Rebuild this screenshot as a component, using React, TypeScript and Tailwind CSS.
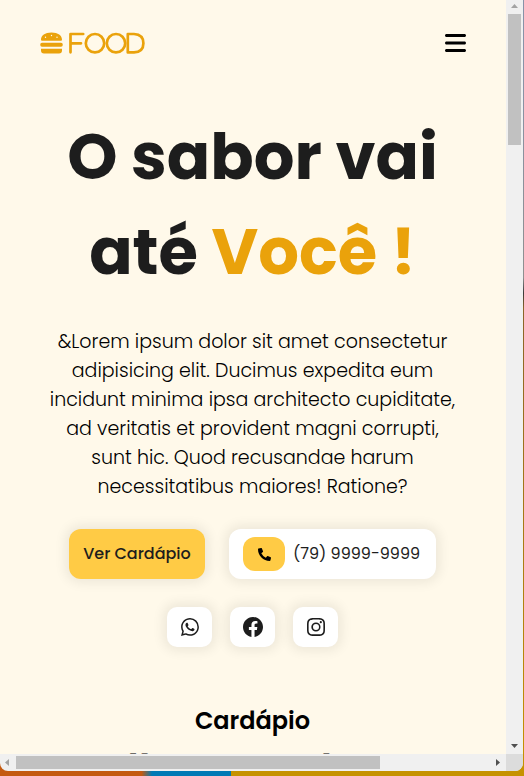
import { FaPhoneAlt } from "react-icons/fa";
import { FaBars } from "react-icons/fa6";
import { BsWhatsapp, BsFacebook, BsInstagram } from "react-icons/bs";

const socials = [
  { label: "WhatsApp", Icon: BsWhatsapp, size: "size-[18px]" },
  { label: "Facebook", Icon: BsFacebook, size: "size-5" },
  { label: "Instagram", Icon: BsInstagram, size: "size-[18px]" },
];

function Logo() {
  return (
    <a href="#inicio" aria-label="Food" className="text-[#eaa20b]">
      <svg width="105" height="24" viewBox="0 0 105 24" fill="none">
        <path
          fill="currentColor"
          d="M1 8.800C1 4.500 5 1.600 11.500 1.600S22 4.500 22 8.800Q22 9.800 21 9.800H2Q1 9.800 1 8.800ZM2 11.800H21Q22.800 11.800 22.800 13.800T21 15.800H2Q0.200 15.800 0.200 13.800T2 11.800ZM1 17.800H22V19.500Q22 22.500 19 22.500H4Q1 22.500 1 19.500Z"
        />
        <g fill="#fff9ea">
          <circle cx="5.500" cy="6.200" r="0.700" />
          <circle cx="11.500" cy="4.500" r="0.700" />
          <circle cx="17" cy="6.200" r="0.700" />
        </g>
        <g stroke="currentColor" strokeWidth="2.700" strokeLinecap="round" strokeLinejoin="round">
          <path d="M43.200 3H30.500V21.300M30.500 12.300H41" />
          <circle cx="55" cy="12.200" r="9.200" />
          <circle cx="76" cy="12.200" r="9.200" />
          <path d="M87.800 3H94Q103.400 3.500 103.400 12.200T94 21.400H87.800Z" />
        </g>
      </svg>
    </a>
  );
}

function Hero() {
  return (
    <section className="px-10 text-center">
      <h1 className="mt-6 text-[64px] leading-[95px] font-bold text-[#1d1d1d]">
        O sabor vai
        <br />
        até <span className="text-[#eaa20b]">Você !</span>
      </h1>
      <p className="mt-7 text-[19px] leading-[29px] font-light whitespace-nowrap text-black">
        &amp;Lorem ipsum dolor sit amet consectetur
        <br />
        adipisicing elit. Ducimus expedita eum
        <br />
        incidunt minima ipsa architecto cupiditate,
        <br />
        ad veritatis et provident magni corrupti,
        <br />
        sunt hic. Quod recusandae harum
        <br />
        necessitatibus maiores! Ratione?
      </p>
      <div className="mt-7 flex justify-center gap-6">
        <button className="h-[50px] w-[136px] rounded-xl bg-[#ffcb45] text-base font-medium whitespace-nowrap text-[#1d1d1d] shadow-[0_0_12px_4px_rgba(0,0,0,0.07)]">
          Ver Cardápio
        </button>
        <a
          href="tel:7999999999"
          className="flex h-[50px] w-[207px] items-center gap-2 rounded-xl bg-white px-[14px] text-base whitespace-nowrap text-[#1d1d1d] shadow-[0_0_12px_4px_rgba(0,0,0,0.07)]"
        >
          <span className="flex h-[34px] w-[42px] shrink-0 items-center justify-center rounded-xl bg-[#ffcb45] text-black">
            <FaPhoneAlt className="size-[13px]" />
          </span>
          (79) 9999-9999
        </a>
      </div>
      <div className="mt-7 flex justify-center gap-[18px]">
        {socials.map(({ label, Icon, size }) => (
          <a
            key={label}
            href="#contato"
            aria-label={label}
            className="flex h-10 w-[45px] items-center justify-center rounded-[10px] bg-white text-[#1d1d1d] shadow-[0_0_12px_4px_rgba(0,0,0,0.07)]"
          >
            <Icon className={size} />
          </a>
        ))}
      </div>
    </section>
  );
}

function Arrow({ d, muted }: { d: string; muted?: boolean }) {
  return (
    <svg width="7" height="7" viewBox="0 0 7 7" className={muted ? "text-[#a3a3a3]" : "text-[#505050]"}>
      <path d={d} fill="currentColor" />
    </svg>
  );
}

export default function App() {
  return (
    <div className="flex h-screen flex-col overflow-hidden bg-[linear-gradient(to_right,#c45a10_27%,#0079b5_29%,#0079b5_44%,#c69200_44%)] font-['Poppins','Inter',sans-serif]">
      <div className="flex min-h-0 grow">
        <div className="grid min-w-0 grow grid-cols-[1fr_17px] grid-rows-[1fr_17px] overflow-hidden rounded-b-lg bg-[#f0f0f0]">
          <main className="min-w-0 overflow-hidden bg-[#fff9ea] pr-px">
            <header className="flex h-[85px] items-center justify-between pr-[39px] pl-10">
              <Logo />
              <button aria-label="Abrir menu" className="text-black">
                <FaBars className="h-6 w-[21px]" />
              </button>
            </header>
            <Hero />
            <section className="mt-14 text-center text-black">
              <h2 className="text-2xl leading-9 font-semibold">Cardápio</h2>
              <h3 className="text-[42px] leading-[64px] font-semibold whitespace-nowrap">Melhores sabores</h3>
            </section>
          </main>
          <div className="flex flex-col items-center justify-between pt-[3px] pb-[5px]">
            <Arrow muted d="M0 5L3.500 1L7 5Z" />
            <div className="mt-1 h-[131px] w-[13px] bg-[#c1c1c1]" />
            <div className="grow" />
            <Arrow d="M0 2L3.500 6L7 2Z" />
          </div>
          <div className="flex items-center pr-[5px] pl-1">
            <Arrow muted d="M5 0L1 3.500L5 7Z" />
            <div className="ml-[5px] h-[13px] w-[364px] bg-[#c1c1c1]" />
            <div className="grow" />
            <Arrow d="M2 0L6 3.500L2 7Z" />
          </div>
          <div className="bg-[#dcdcdc]" />
        </div>
        <div className="w-px bg-[linear-gradient(to_bottom,#8892a8_8%,#8f8f8f_36%,#3a3a3a_38%,#8a6428_40%,#c69200)]" />
      </div>
      <div className="h-[5px] shrink-0" />
    </div>
  );
}
